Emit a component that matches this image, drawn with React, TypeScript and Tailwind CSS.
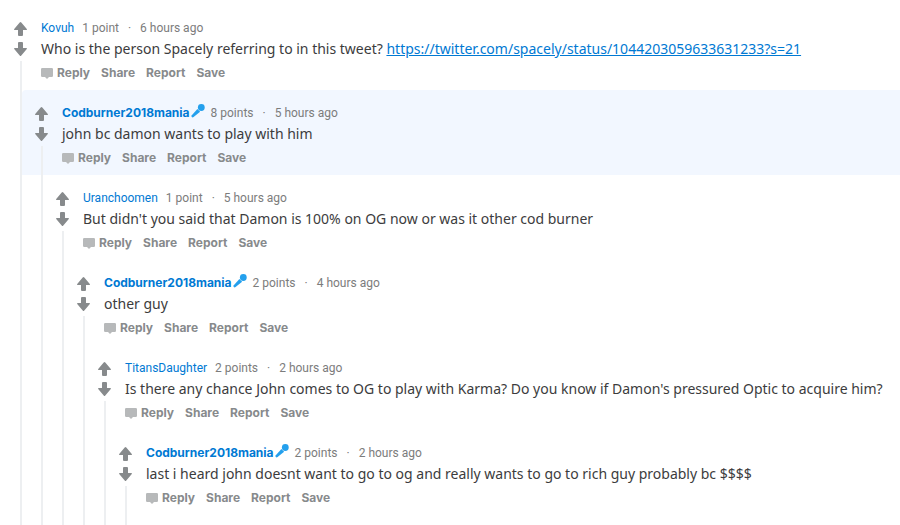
import React from 'react';
import { clsx } from 'clsx';

interface Comment {
  id: number;
  author: string;
  points: string;
  age: string;
  body: string;
  link?: string;
  isOp?: boolean;
  highlighted?: boolean;
  replies?: Comment[];
}

const thread: Comment = {
  id: 1,
  author: 'Kovuh',
  points: '1 point',
  age: '6 hours ago',
  body: 'Who is the person Spacely referring to in this tweet?',
  link: 'https://twitter.com/spacely/status/1044203059633631233?s=21',
  replies: [{
    id: 2,
    author: 'Codburner2018mania',
    points: '8 points',
    age: '5 hours ago',
    body: 'john bc damon wants to play with him',
    isOp: true,
    highlighted: true,
    replies: [{
      id: 3,
      author: 'Uranchoomen',
      points: '1 point',
      age: '5 hours ago',
      body: "But didn't you said that Damon is 100% on OG now or was it other cod burner",
      replies: [{
        id: 4,
        author: 'Codburner2018mania',
        points: '2 points',
        age: '4 hours ago',
        body: 'other guy',
        isOp: true,
        replies: [{
          id: 5,
          author: 'TitansDaughter',
          points: '2 points',
          age: '2 hours ago',
          body: "Is there any chance John comes to OG to play with Karma? Do you know if Damon's pressured Optic to acquire him?",
          replies: [{
            id: 6,
            author: 'Codburner2018mania',
            points: '2 points',
            age: '2 hours ago',
            body: 'last i heard john doesnt want to go to og and really wants to go to rich guy probably bc $$$$',
            isOp: true,
          }],
        }],
      }],
    }],
  }],
};

function ArrowIcon({ down }: { down?: boolean }) {
  return (
    <svg viewBox="0 0 13 14" className={clsx('block w-[13px] h-[14px]', down && 'rotate-180')} fill="currentColor" aria-hidden="true">
      <path d="M6.5 0 Q6.9 0 7.3 .5 L12.8 6.9 Q13.2 8 12.3 8 H9 V13 Q9 14 8 14 H5 Q4 14 4 13 V8 H.7 Q-.2 8 .2 6.9 L5.7 .5 Q6.1 0 6.5 0Z" />
    </svg>
  );
}

function BubbleIcon() {
  return (
    <svg viewBox="0 0 12 12" className="block w-3 h-3 text-[#b7b9ba]" fill="currentColor" aria-hidden="true">
      <path d="M1.2 1 H10.8 Q12 1 12 2.2 V8.8 Q12 10 10.8 10 H8 L6 12 L4 10 H1.2 Q0 10 0 8.8 V2.2 Q0 1 1.2 1Z" />
    </svg>
  );
}

function MicIcon() {
  return (
    <svg viewBox="0 0 14 14" className="block w-[14px] h-[14px] text-[#24a0ed]" fill="currentColor" aria-label="OP">
      <circle cx="10.3" cy="3.5" r="3.4" />
      <path d="M6.4 5 L9.1 7.7 L2.6 13 Q1.6 13.8 .8 13.1 Q0 12.3 .8 11.3Z" />
    </svg>
  );
}

function CommentItem({ comment }: { comment: Comment }) {
  return (
    <article className="grid grid-cols-[21px_1fr] grid-rows-[auto_1fr]">
      <div
        className={clsx(
          'col-start-1 col-span-2 row-start-1 pt-[15px] pb-[5px] pl-10 pr-2 rounded-tl-sm',
          comment.highlighted && 'bg-[#f2f7ff]'
        )}
      >
        <header className="flex items-center h-4 text-xs leading-4 text-[#7c7c7c]">
          <a href="#" className={clsx('text-[#0079d3]', comment.isOp && "font-['Inter',sans-serif] font-bold")}>{comment.author}</a>
          {comment.isOp && <span className="ml-px pb-[5px]"><MicIcon /></span>}
          <span className={comment.isOp ? 'ml-[6px]' : 'ml-2'}>{comment.points}</span>
          <span className="mx-[9px]">·</span>
          <span>{comment.age}</span>
        </header>
        <p className="mt-[2px] font-['Noto_Sans',sans-serif] text-sm leading-[21px] text-[#3c3c3d]">
          {comment.body}
          {comment.link && <> <a href={comment.link} className="text-[#0079d3] underline">{comment.link}</a></>}
        </p>
        <div className="mt-[2px] flex items-center gap-[11px] h-6 font-['Inter',sans-serif] text-xs font-bold text-[#878a8c]">
          <button className="flex items-center gap-1">
            <BubbleIcon />
            Reply
          </button>
          <button>Share</button>
          <button>Report</button>
          <button>Save</button>
        </div>
      </div>

      {/* votes + thread line, runs down past all the replies */}
      <div className="col-start-1 row-start-1 row-span-2 flex flex-col pt-[17px]">
        <div className="ml-[13px] w-[13px] flex flex-col gap-[6px] text-[#878a8c]">
          <button aria-label="upvote"><ArrowIcon /></button>
          <button aria-label="downvote"><ArrowIcon down /></button>
        </div>
        <div className="mt-[5px] ml-[19px] w-[2px] flex-1 bg-[#edeff1]" />
      </div>

      <div className="col-start-2 row-start-2 grid">
        {comment.replies?.map((reply) => (
          <CommentItem key={reply.id} comment={reply} />
        ))}
      </div>
    </article>
  );
}

export default function App() {
  return (
    <main className="min-h-screen grid bg-white pt-[5px] pl-px font-['Roboto',sans-serif]">
      <CommentItem comment={thread} />
    </main>
  );
}
